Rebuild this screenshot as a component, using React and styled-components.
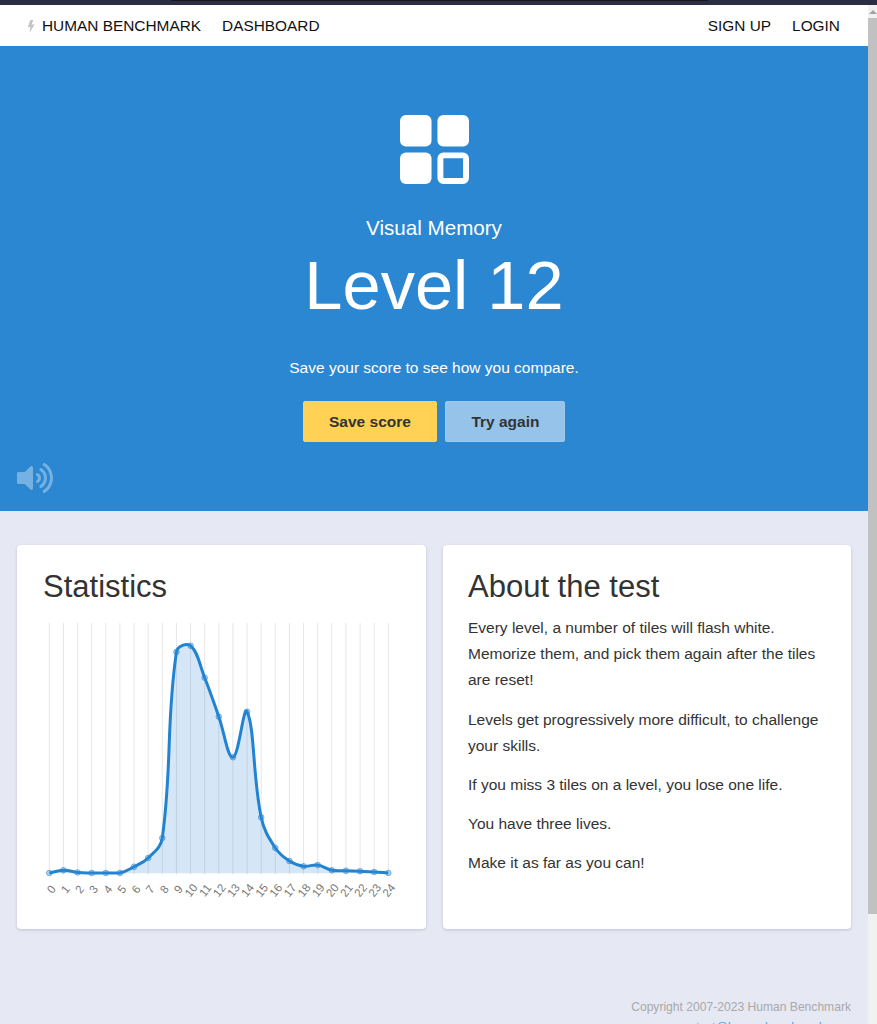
import React from "react";
import styled, { createGlobalStyle } from "styled-components";
import { FaVolumeUp } from "react-icons/fa";

const GlobalStyle = createGlobalStyle`
  html, body {
    margin: 0;
    padding: 0;
    height: 100%;
    overflow: hidden;
  }
  body {
    font-family: "Liberation Sans", Arial, sans-serif;
    color: #333;
  }
`;

const Shell = styled.div`
  display: flex;
  flex-direction: column;
  height: 1024px;
  overflow: hidden;
`;

const TopStrip = styled.div`
  flex: 0 0 5px;
  background: #2b2d42;
  padding-left: 171px;
  padding-right: 169px;
`;

const TopStripLine = styled.div`
  height: 1px;
  background: #17181f;
`;

const Body = styled.div`
  flex: 1;
  min-height: 0;
  display: flex;
`;

const Page = styled.div`
  flex: 1;
  min-width: 0;
  background: #e6e8f4;
  overflow: hidden;
`;

const Scrollbar = styled.div`
  flex: 0 0 9px;
  background: #f1f1f1;
  display: flex;
  flex-direction: column;
  align-items: center;
  padding-top: 5px;
`;

const ScrollArrow = styled.div`
  width: 0;
  height: 0;
  border-left: 4px solid transparent;
  border-right: 4px solid transparent;
  border-bottom: 4px solid #a3a3a3;
`;

const ScrollThumb = styled.div`
  width: 9px;
  height: 896px;
  margin-top: 4px;
  background: #c1c1c1;
`;

const Nav = styled.nav`
  height: 41px;
  box-sizing: border-box;
  padding: 1px 28px 0 27px;
  background: #fff;
  display: flex;
  align-items: center;
  justify-content: space-between;
  font-size: 15.4px;
  color: #111;
`;

const NavGroup = styled.div`
  display: flex;
  align-items: center;
  gap: 21px;
`;

const Brand = styled.div`
  display: flex;
  align-items: center;
  gap: 7px;
`;

const NavLink = styled.a`
  color: #111;
  text-decoration: none;
`;

const Hero = styled.section`
  position: relative;
  height: 465px;
  background: #2b87d1;
  color: #fff;
  display: flex;
  flex-direction: column;
  align-items: center;
  padding-top: 69px;
  box-sizing: border-box;
`;

const HeroTitle = styled.div`
  margin-top: 31px;
  font-size: 20.6px;
  line-height: 26px;
`;

const HeroLevel = styled.div`
  margin-top: 5px;
  font-size: 68.6px;
  line-height: 80px;
`;

const HeroText = styled.div`
  margin-top: 30px;
  font-size: 15.5px;
  line-height: 24px;
`;

const ButtonRow = styled.div`
  margin-top: 21px;
  display: flex;
  gap: 8px;
`;

const Button = styled.button`
  height: 41px;
  padding: 0 ${(props) => props.$pad}px;
  border: 1px solid ${(props) => (props.$primary ? "#ffd154" : "#a0c9ea")};
  border-radius: 2px;
  background: ${(props) => (props.$primary ? "#ffd154" : "#95c3e9")};
  color: #333;
  font: bold 15.5px "Liberation Sans", Arial, sans-serif;
`;

const SoundButton = styled.div`
  position: absolute;
  left: 17px;
  top: 414px;
  display: flex;
  color: rgba(255, 255, 255, 0.35);
`;

const Cards = styled.div`
  display: grid;
  grid-template-columns: 409px 408px;
  gap: 17px;
  padding: 34px 17px 0;
`;

const Card = styled.section`
  height: 384px;
  box-sizing: border-box;
  background: #fff;
  border-radius: 4px;
  box-shadow: 0 1px 3px rgba(60, 60, 110, 0.22);
  padding: 22px 25px 0 ${(props) => props.$left}px;
`;

const CardTitle = styled.h2`
  margin: 0 0 8px;
  font-size: 31px;
  line-height: 40px;
  font-weight: 400;
  color: #333;
`;

const Paragraph = styled.p`
  margin: 0 0 13px;
  font-size: 15.5px;
  line-height: 26.2px;
  color: #333;
`;

const Footer = styled.footer`
  margin-top: 68px;
  padding-right: 17px;
  text-align: right;
  font-size: 12.1px;
  line-height: 20px;
  color: #a9a9a9;
`;

const FooterLink = styled.a`
  color: #4aa3ef;
  text-decoration: none;
`;

const ChartBox = styled.svg`
  display: block;
  margin: 16px 0 0 -26px;
`;

const BoltIcon = () => (
  <svg width="8" height="13" viewBox="0 0 8 13">
    <path d="M3.4 0 .8 7h2.6L2.4 13 7.6 4.6H4.6L6.4 0z" fill="#c4c4c4" />
  </svg>
);

const GameIcon = () => (
  <svg width="69" height="69" viewBox="0 0 70 70">
    <rect x="0" y="0" width="32" height="32" rx="6" fill="#fff" />
    <rect x="38" y="0" width="32" height="32" rx="6" fill="#fff" />
    <rect x="0" y="38" width="32" height="32" rx="6" fill="#fff" />
    <path
      fillRule="evenodd"
      d="M44 38h20a6 6 0 0 1 6 6v20a6 6 0 0 1-6 6H44a6 6 0 0 1-6-6V44a6 6 0 0 1 6-6zm0 6v20h20V44z"
      fill="#fff"
    />
  </svg>
);

// y values read off the reference, in page pixels
const chartValues = [
  873, 870.2, 872.5, 873, 873, 873, 866.7, 858, 838, 652, 645.7, 677.7, 716.7,
  757.3, 711.7, 817.3, 848, 861, 866.3, 865, 870.3, 870.7, 871.3, 872, 873,
];

const CHART_TOP = 623;
const STEP = 14.125;
const X0 = 32.3;
const BASE = 873.3 - CHART_TOP;

const points = chartValues.map((y, i) => ({ x: X0 + i * STEP, y: y - CHART_TOP }));

// same spline as chart.js, tension 0.4
function buildLine(pts) {
  const ctrl = pts.map((p, i) => {
    const prev = pts[i - 1] || p;
    const next = pts[i + 1] || p;
    const d01 = Math.hypot(p.x - prev.x, p.y - prev.y);
    const d12 = Math.hypot(next.x - p.x, next.y - p.y);
    const total = d01 + d12 || 1;
    const fa = (0.4 * d01) / total;
    const fb = (0.4 * d12) / total;
    return {
      inX: p.x - fa * (next.x - prev.x),
      inY: Math.min(p.y - fa * (next.y - prev.y), BASE),
      outX: p.x + fb * (next.x - prev.x),
      outY: Math.min(p.y + fb * (next.y - prev.y), BASE),
    };
  });
  let d = `M${pts[0].x} ${pts[0].y}`;
  for (let i = 1; i < pts.length; i++) {
    d += `C${ctrl[i - 1].outX} ${ctrl[i - 1].outY} ${ctrl[i].inX} ${ctrl[i].inY} ${pts[i].x} ${pts[i].y}`;
  }
  return d;
}

const linePath = buildLine(points);
const areaPath = `${linePath}L${points[24].x} ${BASE}L${points[0].x} ${BASE}Z`;

const Chart = () => (
  <ChartBox width="384" height="282" viewBox="0 0 384 282">
    {points.map((p, i) => (
      <line key={i} x1={p.x} x2={p.x} y1="0" y2={BASE + 1} stroke="#e6e6e6" strokeWidth="1" />
    ))}
    <path d={areaPath} fill="rgba(43,135,209,0.2)" />
    <path d={linePath} fill="none" stroke="#2283d2" strokeWidth="3" />
    {points.map((p, i) => (
      <circle
        key={i}
        cx={p.x}
        cy={p.y}
        r="2.8"
        fill="rgba(43,135,209,0.35)"
        stroke="rgba(43,135,209,0.6)"
        strokeWidth="1"
      />
    ))}
    {points.map((p, i) => {
      const cx = p.x + (i < 10 ? 2 : 0.5);
      const cy = BASE + (i < 10 ? 16 : 17);
      return (
        <text
          key={i}
          x={cx}
          y={cy}
          textAnchor="middle"
          dominantBaseline="central"
          fontSize="11.5"
          fontFamily="Liberation Sans, Arial, sans-serif"
          fill="#777"
          transform={`rotate(-52 ${cx} ${cy})`}
        >
          {i}
        </text>
      );
    })}
  </ChartBox>
);

export default function App() {
  return (
    <Shell>
      <GlobalStyle />
      <TopStrip>
        <TopStripLine />
      </TopStrip>
      <Body>
        <Page>
          <Nav>
            <NavGroup>
              <Brand>
                <BoltIcon />
                <NavLink href="#">HUMAN BENCHMARK</NavLink>
              </Brand>
              <NavLink href="#">DASHBOARD</NavLink>
            </NavGroup>
            <NavGroup>
              <NavLink href="#">SIGN UP</NavLink>
              <NavLink href="#">LOGIN</NavLink>
            </NavGroup>
          </Nav>
          <Hero>
            <GameIcon />
            <HeroTitle>Visual Memory</HeroTitle>
            <HeroLevel>Level 12</HeroLevel>
            <HeroText>Save your score to see how you compare.</HeroText>
            <ButtonRow>
              <Button $primary $pad={25.5}>Save score</Button>
              <Button $pad={25}>Try again</Button>
            </ButtonRow>
            <SoundButton>
              <FaVolumeUp size={36} />
            </SoundButton>
          </Hero>
          <Cards>
            <Card $left={26}>
              <CardTitle>Statistics</CardTitle>
              <Chart />
            </Card>
            <Card $left={25}>
              <CardTitle>About the test</CardTitle>
              <Paragraph>
                Every level, a number of tiles will flash white. Memorize them, and pick them again
                after the tiles are reset!
              </Paragraph>
              <Paragraph>Levels get progressively more difficult, to challenge your skills.</Paragraph>
              <Paragraph>If you miss 3 tiles on a level, you lose one life.</Paragraph>
              <Paragraph>You have three lives.</Paragraph>
              <Paragraph>Make it as far as you can!</Paragraph>
            </Card>
          </Cards>
          <Footer>
            <div>Copyright 2007-2023 Human Benchmark</div>
            <div>
              contact<FooterLink href="#">@humanbenchmark.com</FooterLink>
            </div>
          </Footer>
        </Page>
        <Scrollbar>
          <ScrollArrow />
          <ScrollThumb />
        </Scrollbar>
      </Body>
    </Shell>
  );
}
